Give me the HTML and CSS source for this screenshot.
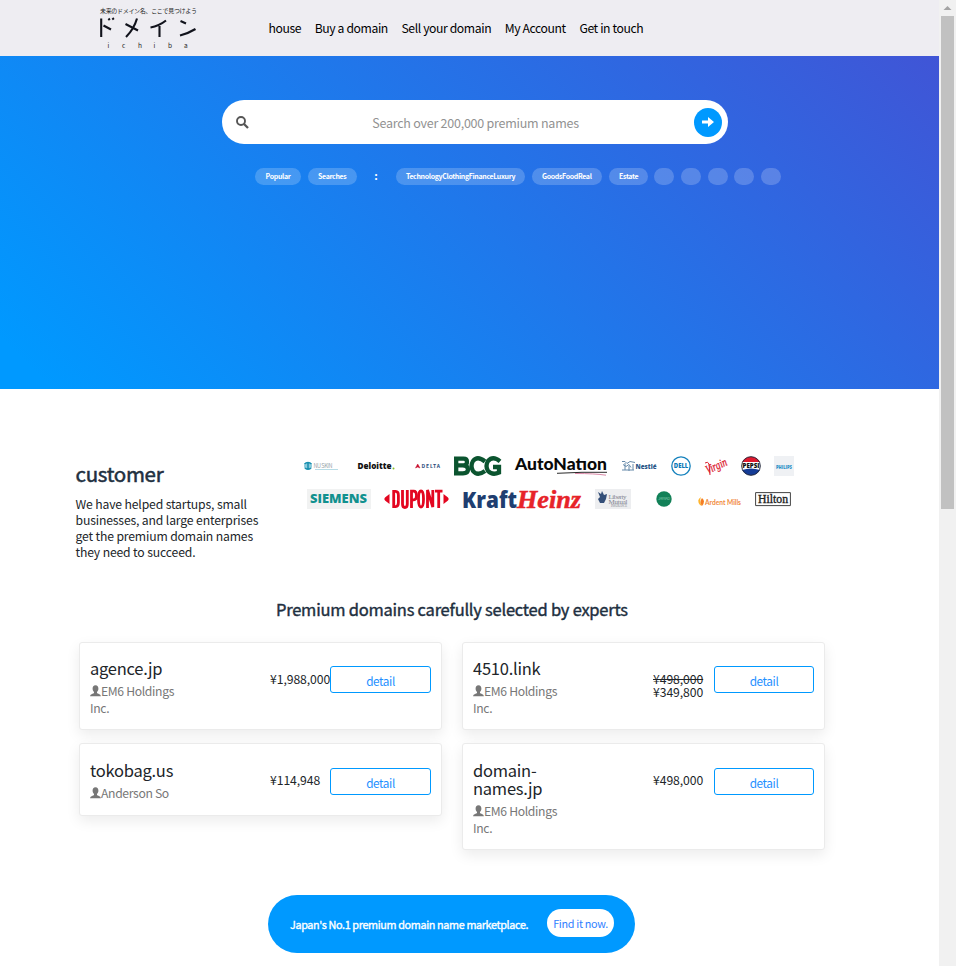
FILE: index.html
```html
<!DOCTYPE html>
<html lang="en">
<head>
<meta charset="utf-8">
<title>ドメイン ichiba</title>
<link rel="stylesheet" href="styles.css">
</head>
<body>
<svg class="defs" width="0" height="0">
  <symbol id="user" viewBox="0 0 11 12"><path d="M5.500.3C3.500.3 2.600 1.600 2.600 3.500c0 1.700.6 2.700 1.400 3.500v1C3.500 8.700.3 9 .1 11.200h10.800C10.700 9 7.500 8.700 7 8V7c.8-.8 1.400-1.800 1.400-3.500C8.400 1.600 7.500.3 5.500.3z"/></symbol>
</svg>
<div class="page">
  <header class="nav">
    <svg class="brand" width="104" height="56" viewBox="0 0 104 56">
      <text x="5" y="12.700" font-size="6" textLength="97" fill="#222">未来のドメイン名、ここで見つけよう</text>
      <g fill="none" stroke="#11131c" stroke-width="2.100">
        <path d="M6.200 18.500v18.500M8.500 25.500l7.500 4M13.500 18.500l1.200 1.600M17.500 18l1.200 1.600"/>
        <path d="M42 18.500Q39 29 31 37M30.500 24l12.500 6.500"/>
        <path d="M71 20.500Q64 26 55.500 27.500M64.500 26v11"/>
        <path d="M85.500 21l5.500 2.500M85 35.500Q94 33 100.500 29"/>
      </g>
      <g font-size="6.500" fill="#222"><text x="12.500" y="47.500">i</text><text x="27" y="47.500">c</text><text x="43" y="47.500">h</text><text x="58.500" y="47.500">i</text><text x="73" y="47.500">b</text><text x="89" y="47.500">a</text></g>
    </svg>
    <nav class="links"><a>house</a><a>Buy a domain</a><a>Sell your domain</a><a>My Account</a><a>Get in touch</a></nav>
  </header>

  <section class="hero">
    <div class="search">
      <svg width="13" height="13" viewBox="0 0 13 13"><circle cx="5" cy="5" r="4" fill="none" stroke="#555" stroke-width="1.900"/><path d="M8 8l4 4" stroke="#555" stroke-width="2.300"/></svg>
      <span class="hint">Search over 200,000 premium names</span>
      <span class="go"><svg width="14" height="12" viewBox="0 0 14 12"><path d="M1 4.500h6V1l6 5-6 5V7.500H1z" fill="#fff"/></svg></span>
    </div>
    <div class="tags">
      <span class="w46">Popular</span><span class="w49">Searches</span><span class="colon">:</span><span class="w129">TechnologyClothingFinanceLuxury</span><span class="w70">GoodsFoodReal</span><span class="w39">Estate</span><span class="dot"></span><span class="dot"></span><span class="dot"></span><span class="dot"></span><span class="dot"></span>
    </div>
  </section>

  <section class="customer">
    <div class="intro">
      <h2>customer</h2>
      <p>We have helped startups, small businesses, and large enterprises get the premium domain names they need to succeed.</p>
    </div>
    <div class="logos">
      <div class="row">
        <svg width="41" height="20"><circle cx="7" cy="10" r="4" fill="#8ccbdc"/><path d="M3.500 8q3.500-3 7 0M4 12q3 2.500 6 0M7 7v7" stroke="#178fae" stroke-width="1.500" fill="none"/><text x="12.500" y="11.500" font-size="5.500" textLength="19" fill="#9aa5ab">NU SKIN</text><path d="M14 13.500h23" stroke="#a5d3df" stroke-width=".8"/></svg>
        <svg width="44" height="20"><text class="open" x="2.500" y="13.300" font-size="9.300" font-weight="800" textLength="34" lengthAdjust="spacingAndGlyphs" fill="#111">Deloitte</text><circle cx="38.500" cy="12.600" r="1" fill="#86bc25"/></svg>
        <svg width="29" height="20"><path d="M3.500 12l2.200-4 2.300 4-2.300-1z" fill="#c8102e" stroke="#c8102e" stroke-width=".5"/><text x="9.500" y="11.800" font-size="5" font-weight="700" textLength="18.500" fill="#284a78">DELTA</text></svg>
        <svg width="48" height="20"><g fill="none" stroke="#0b542f" stroke-width="4.300"><path d="M2.200 2.700v14.600M0 2.700h9.500q3.500 0 3.500 3.300t-3.500 3.400H3M9 9.400q5 .2 5 4t-5 3.900H0"/><path d="M31 5.500Q23.500-.5 19 5q-3 5 0 10 4.500 5.500 12 0"/><path d="M46 5.300Q39-.5 34 5q-3 5 0 10 4.500 4.500 11 1.500V11H39"/></g></svg>
        <svg width="93" height="20"><text class="lato" x="0" y="13.800" font-size="17.500" font-weight="900" textLength="92" lengthAdjust="spacingAndGlyphs" fill="#080808">AutoNatıon</text><path d="M42 17.300q25-1.500 50-1" stroke="#111" fill="none" stroke-width=".9"/><path d="M60 17.500q20 0 31 1.700" stroke="#d67b9d" fill="none" stroke-width=".9"/></svg>
        <svg width="36" height="20"><g fill="none" stroke="#678aaa" stroke-width="1"><path d="M1 5.500h3l2 2 3-2 5 1M2 8.500l3 2 3-2 2 3M1 14h12M4 7v7M8 10v5M12 8v6"/></g><text class="open" x="14.500" y="12.500" font-size="7.500" font-weight="800" textLength="21" lengthAdjust="spacingAndGlyphs" fill="#2b5688">Nestlé</text></svg>
        <svg width="20" height="20"><circle cx="10" cy="10" r="9.200" fill="#fff" stroke="#1682bd" stroke-width="1.300"/><text class="open" x="2.800" y="12.400" font-size="6.800" font-weight="800" textLength="14.500" lengthAdjust="spacingAndGlyphs" fill="#0878b7">DELL</text></svg>
        <svg width="24" height="20"><text class="script" x="2" y="14" font-size="12" textLength="22" lengthAdjust="spacingAndGlyphs" transform="rotate(-24 12 12)" fill="#dc2130" stroke="#dc2130" stroke-width=".3">Virgin</text><path d="M1 7q3-2 4 1l1 11" fill="none" stroke="#dc2130"/></svg>
        <svg width="20" height="20"><circle cx="10" cy="10" r="9.400" fill="#fff"/><path d="M1 6Q4 .7 10 .7T19 6z" fill="#e1192e"/><path d="M1 14q9-3 18 0-3 5.300-9 5.300T1 14z" fill="#143b96"/><circle cx="10" cy="10" r="9.300" fill="none" stroke="#262b3d" stroke-width="1"/><text class="open" x="1.500" y="12.200" font-size="6.300" font-weight="800" textLength="17" lengthAdjust="spacingAndGlyphs" fill="#111">PEPSI</text></svg>
        <svg width="20" height="20"><path fill="#eff1f4" d="M0 0h20v20H0z"/><text class="open" x="2" y="13" font-size="4.300" font-weight="800" textLength="16" lengthAdjust="spacingAndGlyphs" fill="#2e91c8">PHILIPS</text></svg>
      </div>
      <div class="row">
        <svg width="64" height="20"><path fill="#f1f2f2" d="M0 0h64v20H0z"/><text class="open" x="3" y="14" font-size="12" font-weight="800" textLength="57" lengthAdjust="spacingAndGlyphs" fill="#11918f">SIEMENS</text></svg>
        <svg width="65" height="20"><path d="M5.500 5v10L1 11.500Q-.5 10 1 8.500zM59.500 5v10l4.500-3.500q1.500-1.500 0-3z" fill="#e30620"/><g fill="none" stroke="#e30620" stroke-width="2.800"><path d="M9.700 2.400v15.200h2q2.700 0 2.700-4V6.400q0-4-2.700-4z"/><path d="M18.500 1v14q0 3.500 2.400 3.500t2.400-3.500V1"/><path d="M27.500 19V2.200h2.200q2.800 0 2.800 4.300t-2.800 4.300h-2"/><path d="M39.500 10q0-8-2.500-8t-2.500 8 2.500 8 2.500-8z"/><path d="M43.500 19V1l5.300 17V1M51 2.200h7.500M54.700 2v17"/></g></svg>
        <svg width="119" height="20"><text class="open" x="-1" y="18.800" font-size="23.500" font-weight="800" textLength="55" lengthAdjust="spacingAndGlyphs" fill="#203e70">Kraft</text><text class="script" x="54" y="18.500" font-size="25" font-weight="700" textLength="64" lengthAdjust="spacingAndGlyphs" fill="#e72329" stroke="#e72329" stroke-width=".5">Heinz</text></svg>
        <svg width="36" height="20"><path fill="#edeef0" d="M0 0h36v20H0z"/><path d="M3 3l3 2 1-3 2 4 3-1-1 5-2 4H5L3 10l2-2z" fill="#344f78"/><g class="serif" fill="#7d828c"><text x="13.500" y="9.500" font-size="7" textLength="18">Liberty</text><text x="13.500" y="14.500" font-size="7" textLength="19">Mutual</text><text x="16" y="18" font-size="3" textLength="16">INSURANCE</text></g></svg>
        <svg width="40" height="20"><circle cx="20" cy="10" r="7.700" fill="#128158"/><text x="14" y="11.300" font-size="4" textLength="12" fill="#79c2a5">JAFRAD</text></svg>
        <svg width="44" height="20"><path d="M4 8Q-1 11 3 16l2 1Q2 12 4 8z" fill="#ffb52d"/><path d="M5 9q4 3 0 8Q2 13 5 9z" fill="#f57d22"/><text class="lato" x="8" y="15.700" font-size="6.700" font-weight="700" textLength="36" lengthAdjust="spacingAndGlyphs" fill="#f18a3c">Ardent Mills</text></svg>
        <svg width="36" height="20"><path d="M.6 3.600h34.800v13H.6z" fill="#fff" stroke="#444"/><text class="serif" x="3" y="14" font-size="12" textLength="30" lengthAdjust="spacingAndGlyphs" fill="#222" stroke="#222" stroke-width=".35">Hilton</text></svg>
      </div>
    </div>
  </section>

  <h3 class="heading">Premium domains carefully selected by experts</h3>
  <section class="cards">
    <article class="card"><div class="info"><h4>agence.jp</h4><p><svg><use href="#user"/></svg>EM6 Holdings Inc.</p></div><div class="price">¥1,988,000</div><a class="detail">detail</a></article>
    <article class="card"><div class="info"><h4>4510.link</h4><p><svg><use href="#user"/></svg>EM6 Holdings Inc.</p></div><div class="price"><s>¥498,000</s><br>¥349,800</div><a class="detail">detail</a></article>
    <article class="card low"><div class="info"><h4>tokobag.us</h4><p><svg><use href="#user"/></svg>Anderson So</p></div><div class="price">¥114,948</div><a class="detail">detail</a></article>
    <article class="card low"><div class="info"><h4>domain-names.jp</h4><p><svg><use href="#user"/></svg>EM6 Holdings Inc.</p></div><div class="price">¥498,000</div><a class="detail">detail</a></article>
  </section>
  <div class="banner"><b>Japan's No.1 premium domain name marketplace.</b><a>Find it now.</a></div>
</div>
<aside class="scrollbar"><svg width="17" height="16"><path d="M4.500 10L8.500 6l4 4z" fill="#a3a3a3"/></svg><div class="thumb"></div></aside>
</body>
</html>
```
FILE: styles.css
```css
* { box-sizing: border-box; }
body { margin: 0; display: flex; width: 956px; height: 966px; overflow: hidden; background: #fff; font-family: "Noto Sans CJK JP", sans-serif; color: #212529; }
h2, h3, h4, p { margin: 0; font-weight: 400; }
svg { display: block; flex: none; overflow: visible; }
.defs { width: 0; height: 0; }
.page { width: 939px; flex: none; }
.nav { height: 56px; background: #eeedf2; display: flex; padding-left: 95px; }
.links { display: flex; align-items: center; gap: 13.600px; padding-left: 69.500px; font-size: 12.200px; letter-spacing: -.4px; line-height: 20px; color: #000; white-space: nowrap; }
.hero { height: 333px; background: linear-gradient(45deg, #09f 4%, #4055d6 100%); padding-top: 44px; }
.search { width: 506px; height: 44px; margin-left: 222px; background: #fff; border-radius: 22px; display: flex; align-items: center; padding: 0 6px 0 14px; }
.hint { flex: 1; text-align: center; color: #929292; font-size: 12.500px; letter-spacing: -.24px; padding: 1px 0 0 8px; }
.go { width: 28px; height: 29px; border-radius: 50%; background: #09f; display: flex; align-items: center; justify-content: center; }
.tags { display: flex; gap: 6.700px; padding: 24px 0 0 255px; }
.tags span { height: 17px; border-radius: 9px; background: rgba(255, 255, 255, .2); color: #fff; font-size: 7px; font-weight: 700; line-height: 17px; text-align: center; white-space: nowrap; letter-spacing: -.34px; }
.tags .w46 { width: 46px; }
.tags .w49 { width: 49px; }
.tags .w129 { width: 129px; }
.tags .w70 { width: 70px; }
.tags .w39 { width: 39px; margin: 0 -.7px 0 .7px; }
.tags .dot { width: 20px; }
.tags .colon { width: 25px; margin-right: 1px; background: none; font-size: 11px; line-height: 15px; }
.customer { display: flex; height: 207px; padding: 67px 0 0 75.500px; }
.intro { width: 185px; flex: none; }
.intro h2 { font-size: 20.500px; letter-spacing: -.3px; line-height: 32px; margin-top: 1px; color: #212f40; -webkit-text-stroke: .5px #212f40; }
.intro p { font-size: 12.200px; letter-spacing: -.15px; line-height: 16px; padding-top: 7px; }
.logos { display: flex; flex-direction: column; gap: 13px; padding-left: 40.500px; }
.row { display: flex; gap: 13.100px; }
.row + .row { padding-left: 6px; gap: 13.300px; }
.open { font-family: "Open Sans", sans-serif; }
.lato { font-family: Lato, sans-serif; }
.serif { font-family: "Liberation Serif", serif; }
.script { font-family: "Liberation Serif", serif; font-style: italic; }
.heading { padding-left: 276px; font-size: 16.500px; letter-spacing: -.24px; line-height: 26px; color: #212f40; -webkit-text-stroke: .4px #212f40; white-space: nowrap; }
.cards { display: grid; grid-template-columns: 363px 363px; column-gap: 20px; row-gap: 13px; align-items: start; padding: 20px 0 0 79px; }
.card { display: flex; align-items: flex-start; border: 1px solid #ebebeb; border-radius: 3px; background: #fff; box-shadow: 0 5px 14px rgba(0, 0, 0, .08); padding: 16px 10px 13px; }
.card.low { padding-top: 17px; }
.info { width: 100px; margin-right: 80px; }
.info h4 { font-size: 16.500px; letter-spacing: -.25px; line-height: 18px; color: #212529; }
.info p { font-size: 12.200px; letter-spacing: -.35px; line-height: 16.500px; color: #777; padding-top: 6px; }
.info svg { display: inline-block; width: 11px; height: 12px; fill: #777; vertical-align: -1px; }
.price { width: 60px; font-size: 12.200px; letter-spacing: -.07px; line-height: 13px; padding-top: 14px; white-space: nowrap; }
.low .price { padding-top: 13px; }
.detail { width: 101px; height: 27px; margin-top: 7px; border: 1px solid #09f; border-radius: 3px; color: #1e90ff; font-size: 11.800px; letter-spacing: -.4px; line-height: 28px; text-align: center; }
.card:nth-child(even) .price { width: 61px; }
.card:nth-child(even) .detail { width: 100px; }
.banner { width: 367px; height: 58px; margin: 45px 0 0 268px; border-radius: 29px; background: #09f; display: flex; align-items: flex-start; padding: 14px 21px 0 22px; justify-content: space-between; }
.banner b { font-size: 10.800px; letter-spacing: -.35px; line-height: 31px; color: #fff; white-space: nowrap; font-weight: 400; -webkit-text-stroke: .35px #fff; }
.banner a { width: 67px; height: 28px; border-radius: 14px; background: #fff; color: #3080ff; font-size: 10.800px; letter-spacing: -.3px; line-height: 29px; text-align: center; white-space: nowrap; }
.scrollbar { width: 17px; height: 966px; background: #f1f1f1; }
.thumb { width: 13px; height: 493px; margin-left: 2px; background: #c1c1c1; }
```
